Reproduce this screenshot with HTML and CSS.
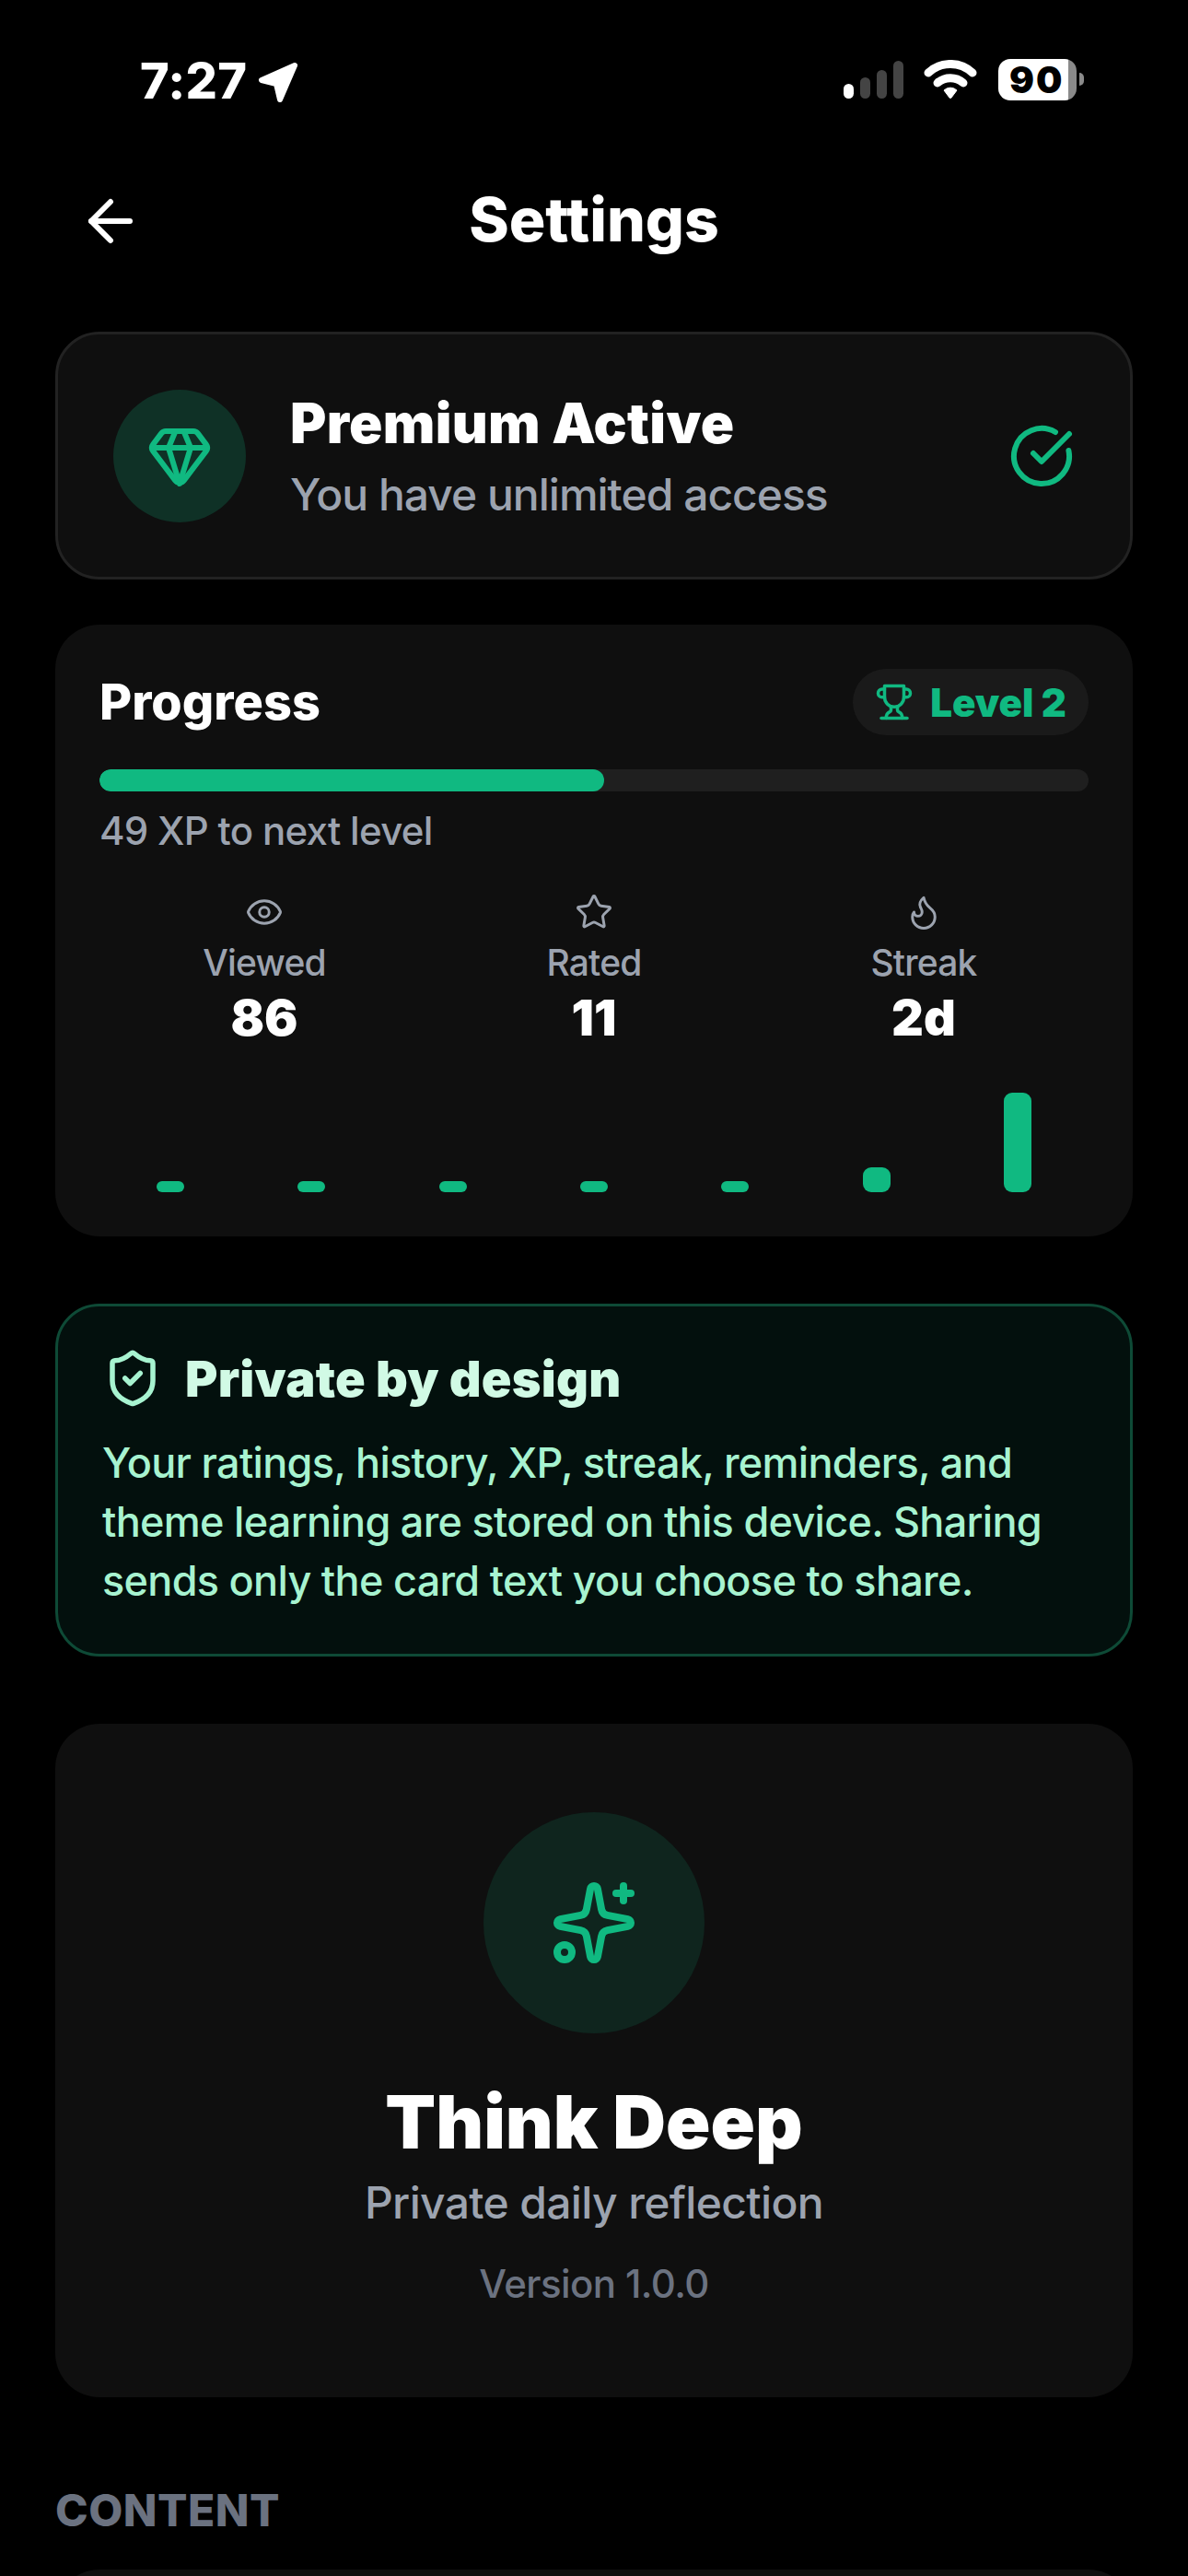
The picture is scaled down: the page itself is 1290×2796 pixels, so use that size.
FILE: index.html
```html
<!DOCTYPE html>
<html lang="en">
<head>
<meta charset="utf-8">
<title>Settings</title>
<link rel="stylesheet" href="styles.css">
</head>
<body>
<div class="status">
  <div class="status-left">
    <span class="time">7:27</span>
    <svg class="loc" viewBox="0 0 44 45"><path d="M40 5 4 21l16 4 4 17z" fill="#fff" stroke="#fff" stroke-width="6" stroke-linejoin="round"/></svg>
  </div>
  <div class="status-right">
    <svg class="signal" viewBox="0 0 65 41"><rect x="0" y="25" width="11" height="16" rx="5.5" fill="#fff"/><rect x="18" y="18" width="11" height="23" rx="5.5" fill="#444"/><rect x="36" y="10" width="11" height="31" rx="5.5" fill="#444"/><rect x="54" y="0" width="11" height="41" rx="5.5" fill="#444"/></svg>
    <svg class="wifi" viewBox="0 0 58 43"><path d="M5 14a35 35 0 0 1 48 0" fill="none" stroke="#fff" stroke-width="9" stroke-linecap="round"/><path d="M15 25a21 21 0 0 1 28 0" fill="none" stroke="#fff" stroke-width="9" stroke-linecap="round"/><path d="M22 33a10 10 0 0 1 14 0l-6 8a1.5 1.5 0 0 1-2 0z" fill="#fff" stroke="#fff" stroke-linejoin="round"/></svg>
    <div class="battery"><div class="batt-body">90</div><div class="batt-nub"></div></div>
  </div>
</div>

<header class="header">
  <svg class="ico back" viewBox="0 0 24 24"><path d="m12 19-7-7 7-7"/><path d="M19 12H5"/></svg>
  <h1 class="page-title">Settings</h1>
</header>

<main class="content">
  <section class="card premium">
    <div class="gem-circle">
      <svg class="ico i72 green" viewBox="0 0 24 24"><path d="M10.5 3 8 9l4 13 4-13-2.5-6"/><path d="M7 3h10a2 2 0 0 1 1.6.8l3 4a2 2 0 0 1 0 2.4l-8 10.6a2 2 0 0 1-3.2 0l-8-10.6a2 2 0 0 1 0-2.4l3-4A2 2 0 0 1 7 3z"/><path d="M2 9h20"/></svg>
    </div>
    <div class="premium-text">
      <div class="premium-title">Premium Active</div>
      <div class="premium-sub">You have unlimited access</div>
    </div>
    <svg class="ico i72 green" viewBox="0 0 24 24"><path d="M21.801 10A10 10 0 1 1 17 3.335"/><path d="m9 11 3 3L22 4"/></svg>
  </section>

  <section class="card progress">
    <div class="progress-head">
      <div class="progress-title">Progress</div>
      <div class="pill">
        <svg class="ico i42 green" viewBox="0 0 24 24"><path d="M6 9H4.5a2.5 2.5 0 0 1 0-5H6"/><path d="M18 9h1.5a2.5 2.5 0 0 0 0-5H18"/><path d="M4 22h16"/><path d="M10 14.66V17c0 .55-.47.98-.97 1.21C7.85 18.75 7 20.24 7 22"/><path d="M14 14.66V17c0 .55.47.98.97 1.21C16.15 18.75 17 20.24 17 22"/><path d="M18 2H6v7a6 6 0 0 0 12 0V2Z"/></svg>
        <span class="pill-text">Level 2</span>
      </div>
    </div>
    <div class="track"><div class="fill"></div></div>
    <div class="xp">49 XP to next level</div>
    <div class="stats">
      <div class="stat">
        <svg class="ico i42 gray" viewBox="0 0 24 24"><path d="M2.062 12.348a1 1 0 0 1 0-.696 10.75 10.75 0 0 1 19.876 0 1 1 0 0 1 0 .696 10.75 10.75 0 0 1-19.876 0"/><circle cx="12" cy="12" r="3"/></svg>
        <div class="stat-label">Viewed</div>
        <div class="stat-value">86</div>
      </div>
      <div class="stat">
        <svg class="ico i42 gray" viewBox="0 0 24 24"><path d="M11.525 2.295a.53.53 0 0 1 .95 0l2.31 4.679a2.123 2.123 0 0 0 1.595 1.16l5.166.756a.53.53 0 0 1 .294.904l-3.736 3.638a2.123 2.123 0 0 0-.611 1.878l.882 5.14a.53.53 0 0 1-.771.56l-4.618-2.428a2.122 2.122 0 0 0-1.973 0L6.396 21.01a.53.53 0 0 1-.77-.56l.881-5.139a2.122 2.122 0 0 0-.611-1.879L2.16 9.795a.53.53 0 0 1 .294-.906l5.165-.755a2.122 2.122 0 0 0 1.597-1.16z"/></svg>
        <div class="stat-label">Rated</div>
        <div class="stat-value">11</div>
      </div>
      <div class="stat">
        <svg class="ico i42 gray" viewBox="0 0 24 24"><path d="M8.5 14.5A2.5 2.5 0 0 0 11 12c0-1.38-.5-2-1-3-1.072-2.143-.224-4.054 2-6 .5 2.5 2 4.9 4 6.5 2 1.6 3 3.5 3 5.5a7 7 0 1 1-14 0c0-1.153.433-2.294 1-3a2.5 2.5 0 0 0 2.5 2.5z"/></svg>
        <div class="stat-label">Streak</div>
        <div class="stat-value">2d</div>
      </div>
    </div>
    <div class="chart">
      <div class="col"><div class="bar"></div></div>
      <div class="col"><div class="bar"></div></div>
      <div class="col"><div class="bar"></div></div>
      <div class="col"><div class="bar"></div></div>
      <div class="col"><div class="bar"></div></div>
      <div class="col"><div class="bar bar-mid"></div></div>
      <div class="col"><div class="bar bar-tall"></div></div>
    </div>
  </section>

  <section class="card private">
    <div class="private-head">
      <svg class="ico i66 mint" viewBox="0 0 24 24"><path d="M20 13c0 5-3.5 7.5-7.66 8.95a1 1 0 0 1-.67-.01C7.5 20.5 4 18 4 13V6a1 1 0 0 1 1-1c2 0 4.5-1.2 6.24-2.72a1.17 1.17 0 0 1 1.52 0C14.51 3.81 17 5 19 5a1 1 0 0 1 1 1z"/><path d="m9 12 2 2 4-4"/></svg>
      <div class="private-title">Private by design</div>
    </div>
    <p class="private-body">Your ratings, history, XP, streak, reminders, and theme learning are stored on this device. Sharing sends only the card text you choose to share.</p>
  </section>

  <section class="card about">
    <div class="spark-circle">
      <svg class="ico i96 green" viewBox="0 0 24 24"><path d="M11.017 2.814a1 1 0 0 1 1.966 0l1.051 5.558a2 2 0 0 0 1.594 1.594l5.558 1.051a1 1 0 0 1 0 1.966l-5.558 1.051a2 2 0 0 0-1.594 1.594l-1.051 5.558a1 1 0 0 1-1.966 0l-1.051-5.558a2 2 0 0 0-1.594-1.594l-5.558-1.051a1 1 0 0 1 0-1.966l5.558-1.051a2 2 0 0 0 1.594-1.594z"/><path d="M20 2v4"/><path d="M22 4h-4"/><circle cx="4" cy="20" r="2"/></svg>
    </div>
    <div class="about-title">Think Deep</div>
    <div class="about-sub">Private daily reflection</div>
    <div class="about-ver">Version 1.0.0</div>
  </section>

  <div class="section-label">CONTENT</div>
  <section class="card next"></section>
</main>
</body>
</html>
```

FILE: styles.css
```css
* { box-sizing: border-box; margin: 0; padding: 0; }
html, body { height: 2796px; overflow: hidden; }
body { background: #000; color: #fff; font-family: Inter, "Noto Sans", sans-serif; width: 1290px; }

.ico { fill: none; stroke: currentColor; stroke-width: 2; stroke-linecap: round; stroke-linejoin: round; flex: none; display: block; }
.i72 { width: 72px; height: 72px; }
.i42 { width: 42px; height: 42px; }
.i66 { width: 66px; height: 66px; }
.i96 { width: 96px; height: 96px; }
.green { color: #10b981; }
.gray { color: #9ca3af; stroke-width: 1.7; }
.mint { color: #a7f3d0; }

.status { height: 180px; padding: 61px 113px 0 152px; display: flex; justify-content: space-between; align-items: flex-start; }
.status-left, .status-right { display: flex; align-items: center; height: 54px; }
.status-right { margin-top: -2px; }
.time { font-size: 54px; line-height: 54px; font-weight: 800; letter-spacing: .3px; }
.loc { width: 44px; height: 45px; margin-left: 12px; }
.signal { width: 65px; height: 41px; }
.wifi { width: 58px; height: 43px; margin-left: 22px; }
.battery { display: flex; align-items: center; margin-left: 23px; }
.batt-body { width: 85px; height: 45px; border-radius: 13px; background: linear-gradient(90deg, #fff 89.5%, #8a8a8a 89.5%); color: #000; font-size: 40px; font-weight: 900; line-height: 45px; padding-left: 12px; letter-spacing: 2px; }
.batt-nub { width: 5px; height: 14px; margin-left: 3px; border-radius: 0 5px 5px 0; background: #8a8a8a; }

.header { padding: 24px 60px 84px 84px; position: relative; display: flex; align-items: center; height: 180px; }
.back { width: 72px; height: 72px; color: #fff; }
.page-title { position: absolute; left: 0; right: 0; top: 22px; text-align: center; font-size: 66px; line-height: 72px; font-weight: 800; }

.content { padding: 0 60px; }
.card { background: #0f0f0f; border-radius: 48px; }

.premium { height: 269px; border: 3px solid #222; padding: 0 60px; display: flex; align-items: center; margin-bottom: 49px; }
.gem-circle { width: 144px; height: 144px; border-radius: 50%; background: rgba(16, 185, 129, .2); display: flex; align-items: center; justify-content: center; flex: none; }
.premium-text { flex: 1; margin-left: 48px; }
.premium-title { font-size: 60px; line-height: 84px; font-weight: 900; letter-spacing: .3px; }
.premium-sub { font-size: 48px; line-height: 72px; font-weight: 500; letter-spacing: -1px; color: #9ca3af; }

.progress { height: 664px; padding: 48px; margin-bottom: 73px; }
.progress-head { display: flex; justify-content: space-between; align-items: center; height: 72px; }
.progress-title { font-size: 54px; line-height: 72px; font-weight: 800; }
.pill { height: 72px; padding: 0 24px; border-radius: 36px; background: #1a1a1a; display: flex; align-items: center; gap: 18px; }
.pill-text { font-size: 42px; font-weight: 900; color: #10b981; }
.track { height: 24px; margin-top: 37px; border-radius: 12px; background: #1f1f1f; overflow: hidden; }
.fill { width: 51%; height: 100%; border-radius: 12px; background: #10b981; }
.xp { font-size: 42px; line-height: 54px; margin-top: 16px; font-weight: 500; letter-spacing: -.7px; color: #9ca3af; }
.stats { display: flex; margin-top: 40px; }
.stat { flex: 1; display: flex; flex-direction: column; align-items: center; }
.stat-label { font-size: 39px; line-height: 54px; margin-top: 7px; font-weight: 500; letter-spacing: -.8px; color: #9ca3af; }
.stat-value { font-size: 54px; line-height: 66px; font-weight: 900; }
.chart { display: flex; align-items: flex-end; height: 108px; margin-top: 48px; }
.col { flex: 1; display: flex; justify-content: center; }
.bar { width: 30px; height: 12px; border-radius: 6px; background: #10b981; }
.bar-mid { height: 27px; border-radius: 9px; }
.bar-tall { height: 108px; border-radius: 9px; }

.private { height: 383px; border: 3px solid #0e4a36; background: #03100d; padding: 45px 48px; margin-bottom: 73px; }
.private-head { display: flex; align-items: center; gap: 24px; }
.private-title { font-size: 54px; font-weight: 900; letter-spacing: .25px; color: #d1fae5; }
.private-body { margin-top: 27px; font-size: 45px; line-height: 64px; font-weight: 500; letter-spacing: -.7px; color: #a7f3d0; }

.about { height: 731px; padding-top: 96px; display: flex; flex-direction: column; align-items: center; }
.spark-circle { width: 240px; height: 240px; border-radius: 50%; background: rgba(16, 185, 129, .13); display: flex; align-items: center; justify-content: center; }
.about-title { font-size: 80px; line-height: 108px; font-weight: 900; margin-top: 42px; }
.about-sub { font-size: 48px; line-height: 66px; font-weight: 500; letter-spacing: -.65px; margin-top: 1px; color: #9ca3af; }
.about-ver { font-size: 42px; line-height: 54px; margin-top: 28px; font-weight: 500; letter-spacing: -.6px; color: #6b7280; }

.section-label { font-size: 48px; line-height: 54px; font-weight: 800; letter-spacing: .5px; color: #6b7280; height: 54px; margin-top: 96px; margin-bottom: 37px; }
.next { height: 300px; }
```
